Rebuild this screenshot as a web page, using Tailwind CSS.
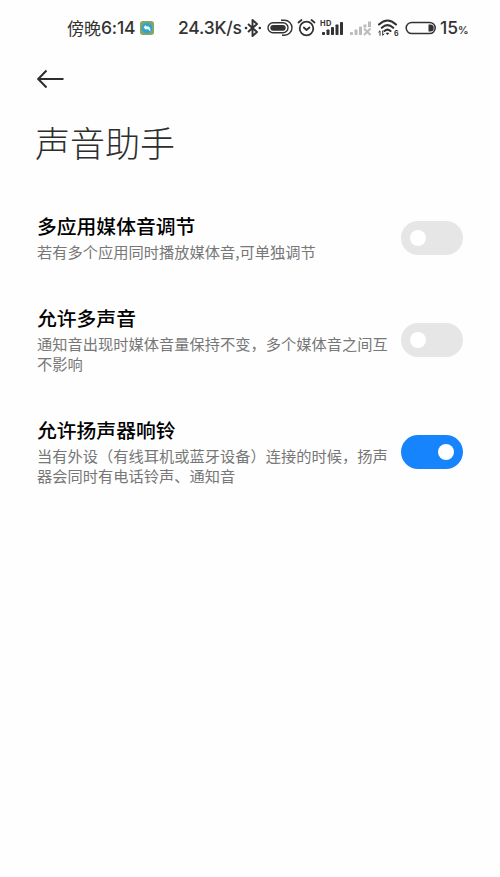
<!DOCTYPE html>
<html lang="zh-CN">
<head>
<meta charset="utf-8">
<title>声音助手</title>
<script src="https://cdn.jsdelivr.net/npm/@tailwindcss/browser@4"></script>
</head>
<body class="bg-[#fefefe] w-[500px] h-[877px] overflow-hidden text-black font-['Noto_Sans_CJK_SC',sans-serif]">
<header class="h-14 pl-[67px] flex items-center text-[#333] whitespace-nowrap">
  <div class="w-[73px] flex items-center text-[17px] leading-6"><span class="w-[34px]">傍晚</span><span class="font-['Inter','Noto_Sans_CJK_SC',sans-serif] text-[17.5px] tracking-[-0.2px] font-medium">6:14</span></div>
  <svg class="w-[14px] h-[14px] shrink-0" viewBox="0 0 14 14"><rect width="14" height="14" rx="3" fill="#83a568"/><circle cx="7" cy="7" r="5.300" fill="#2da4c9"/><path d="M3.500 6.200 6 4v1.200q5-.7 4.300 5.300L8 8.300 6 8.200V9z" fill="#eefaff"/></svg>
  <span class="ml-6 w-[66px] font-['Inter',sans-serif] text-[17.500px] leading-6 font-medium tracking-[-0.2px]">24.3K/s</span>
  <svg class="w-[18px] h-[20px] shrink-0" viewBox="0 0 18 20" fill="none" stroke="#333" stroke-width="1.900" stroke-linejoin="round"><path d="m4 6 9 8-4.500 4V2L13 6l-9 8"/><circle cx="2" cy="10" r="1.300" fill="#333" stroke="none"/><circle cx="15.800" cy="10" r="1.300" fill="#333" stroke="none"/></svg>
  <svg class="ml-[5px] w-[26px] h-[18px] shrink-0" viewBox="0 0 26 18" fill="none" stroke="#333"><rect x="1" y="3.800" width="20" height="10" rx="5" stroke-width="1.400"/><rect x="3.300" y="5.900" width="15.400" height="5.800" rx="2.900" fill="#333" stroke="none"/><path d="M14 1.300h3.500a7.400 7.400 0 0 1 0 15H15" stroke-width="1.400"/></svg>
  <svg class="ml-1 w-[19px] h-[20px] shrink-0" viewBox="0 0 19 20" fill="none" stroke="#333" stroke-width="1.800" stroke-linecap="round" stroke-linejoin="round"><circle cx="9.500" cy="10.500" r="6.800"/><path d="m1.500 4.500 3-2.500m10 0 3 2.500M6.800 9.500l2.700 2.500 3-2.500"/></svg>
  <svg class="ml-1 w-[25px] h-[20px] shrink-0" viewBox="0 0 25 20" fill="#333"><text x="0" y="7.500" font-family="Inter,sans-serif" font-size="7.500" font-weight="700" textLength="11.500">HD</text><rect x="2" y="14" width="3" height="3" rx=".7"/><rect x="6.500" y="11.500" width="3" height="5.500" rx=".7"/><rect x="11" y="9" width="3" height="8" rx=".7"/><rect x="15.500" y="6.500" width="3" height="10.500" rx=".7"/><rect x="20" y="4" width="3" height="13" rx=".7"/></svg>
  <svg class="ml-1 w-[24px] h-[20px] shrink-0" viewBox="0 0 24 20" fill="#bbb"><rect x="1" y="14" width="3" height="3" rx=".7"/><rect x="5.500" y="11.500" width="3" height="5.500" rx=".7"/><rect x="10" y="8.500" width="3" height="8.500" rx=".7"/><rect x="14.500" y="6.500" width="3" height="3"/><rect x="19" y="3.500" width="3" height="5.500"/><path d="m15 10.500 6.500 6.500m0-6.500L15 17" stroke="#bbb" stroke-width="2"/></svg>
  <svg class="ml-1 w-[24px] h-[20px] shrink-0" viewBox="0 0 24 20" fill="none" stroke="#333" stroke-width="2.100" stroke-linecap="round"><path d="M2 6.500q8.500-8 17 0M4.800 9.800q5.700-5.300 11.400 0M7.500 13q3-2.800 6 0"/><path d="M8.700 15.200q1.800-1.400 3.600 0L10.500 17z" fill="#333" stroke="none"/><path d="M3 17.300v-4.500L1.700 14M5.700 12.800v4.500L7 16.100" stroke-width="1"/><text x="17" y="18" font-family="Inter,sans-serif" font-size="7" font-weight="700" fill="#333" stroke="none">6</text></svg>
  <svg class="ml-1 w-[32px] h-[14px] shrink-0" viewBox="0 0 32 14" fill="none" stroke="#333"><rect x="1.200" y="1.400" width="29" height="11.200" rx="5.600" stroke-width="1.500"/><path d="M23.500 3.500h1.800a3.500 3.500 0 0 1 0 7h-1.800z" fill="#333" stroke="none"/></svg>
  <span class="ml-[3px] mt-[2px] font-['Inter',sans-serif] text-[17.500px] leading-6 font-medium">15<span class="text-[10.500px] font-semibold">%</span></span>
</header>
<main class="px-[37px]">
  <button class="block mt-3" aria-label="返回"><svg class="w-[28px] h-[22px]" viewBox="0 0 28 22" fill="none" stroke="#2d2d2d" stroke-width="2"><path d="M26.500 11H1.500M9.500 2.500 1.200 11l8.300 8.500"/></svg></button>
  <h1 class="mt-[28px] -ml-[2px] text-[35px] leading-[48px] font-light text-[#2d2d2d]">声音助手</h1>
  <section class="mt-[49px] h-[46px] flex justify-between items-center">
    <div><h2 class="-mt-px text-[19.800px] leading-[24px] font-medium">多应用媒体音调节</h2><p class="text-[15.250px] leading-[20px] mt-[3px] text-[#777] whitespace-nowrap">若有多个应用同时播放媒体音,可单独调节</p></div>
    <div class="w-[62px] h-[34px] rounded-full bg-[#e6e6e6] flex items-center pl-[9px] shrink-0"><span class="size-4 rounded-full bg-white"></span></div>
  </section>
  <section class="mt-[46px] h-[66px] flex justify-between items-center">
    <div><h2 class="-mt-px text-[19.800px] leading-[24px] font-medium">允许多声音</h2><p class="text-[15.250px] leading-[20px] mt-[3px] text-[#777] whitespace-nowrap">通知音出现时媒体音量保持不变，多个媒体音之间互<br>不影响</p></div>
    <div class="w-[62px] h-[34px] rounded-full bg-[#e6e6e6] flex items-center pl-[9px] shrink-0"><span class="size-4 rounded-full bg-white"></span></div>
  </section>
  <section class="mt-[46px] h-[66px] flex justify-between items-center">
    <div><h2 class="-mt-px text-[19.800px] leading-[24px] font-medium">允许扬声器响铃</h2><p class="text-[15.250px] leading-[20px] mt-[3px] text-[#777] whitespace-nowrap">当有外设（有线耳机或蓝牙设备）连接的时候，扬声<br>器会同时有电话铃声、通知音</p></div>
    <div class="w-[62px] h-[34px] rounded-full bg-[#1684fc] flex items-center justify-end pr-[9px] shrink-0"><span class="size-4 rounded-full bg-white"></span></div>
  </section>
</main>
</body>
</html>
